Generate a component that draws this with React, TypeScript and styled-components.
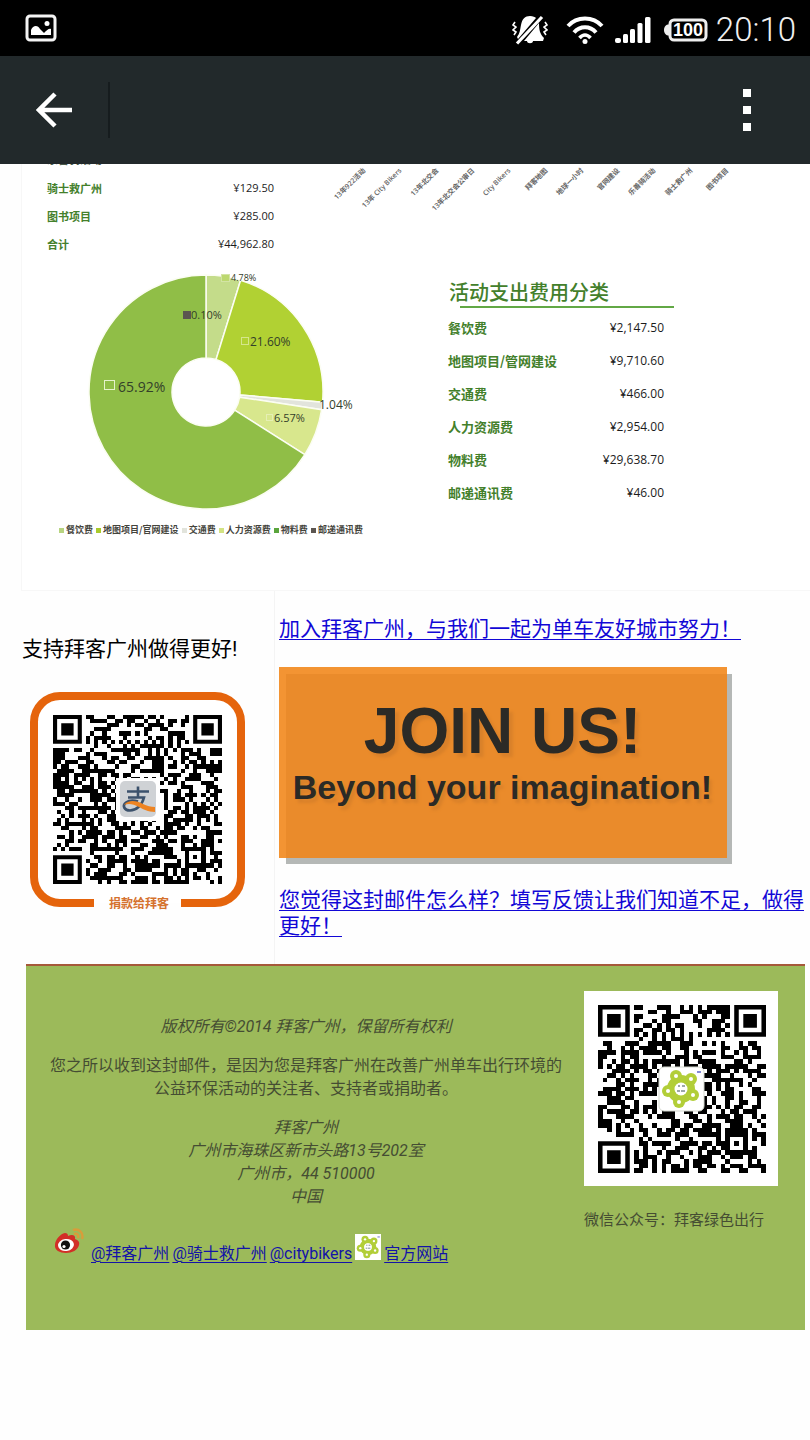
import React from "react";
import styled, { createGlobalStyle } from "styled-components";

const GlobalStyle = createGlobalStyle`
  *, *::before, *::after { box-sizing: border-box; }
  body {
    margin: 0;
    background: #fefefe;
    color: #000;
    font-family: Roboto, "Noto Sans CJK SC", sans-serif;
  }
`;

/* ---------- system and app bars ---------- */

const StatusBar = styled.div`
  display: flex;
  align-items: center;
  justify-content: space-between;
  height: 56px;
  padding: 0 14px 0 25px;
  background: #000;
  color: #fff;
`;

const StatusIcons = styled.div`
  display: flex;
  align-items: center;
  gap: 8px;
  padding-top: 4px;
`;

const IconGroup = styled.div`
  display: flex;
  align-items: center;
  gap: 10px;
  margin: 0 4px 0 10px;
`;

const Clock = styled.time`
  font-size: 33px;
  line-height: 36px;
  font-weight: 300;
  color: #f0f0f0;
`;

const AppBar = styled.header`
  display: flex;
  align-items: center;
  height: 108px;
  padding: 0 36px 0 0;
  background: #22292b;
`;

const BarButton = styled.button<{ $width: number }>`
  display: flex;
  align-items: center;
  justify-content: center;
  width: ${(p) => p.$width}px;
  height: 56px;
  padding: 0;
  border: 0;
  background: none;
  color: #fff;
`;

const BarDivider = styled.span`
  flex: none;
  width: 2px;
  height: 56px;
  margin-right: auto;
  background: #161c1e;
`;

/* ---------- expense report ---------- */

const Report = styled.section`
  margin-left: 21px;
  border-left: 1px solid #f7f7f7;
  border-bottom: 1px solid #f7f7f7;
  background: #fff;
`;

const ReportRow = styled.div<{ $columns: string }>`
  display: grid;
  grid-template-columns: ${(p) => p.$columns};
  align-items: start;
`;

const ProjectCell = styled.div`
  padding-left: 25px;
`;

/* Last visible edge of the row scrolled under the app bar. */
const CutLine = styled.div`
  display: flex;
  align-items: flex-end;
  height: 10px;
  padding-bottom: 1px;
  overflow: hidden;
  font: bold 11px/28px "Noto Sans CJK SC", sans-serif;
  color: #4a5a4a;
`;

const AmountTable = styled.table<{ $label: number; $amount: number; $row: number; $width: number }>`
  width: ${(p) => p.$width}px;
  border-collapse: collapse;

  tr { height: ${(p) => p.$row}px; }
  th, td { padding: 0; line-height: 20px; }
  th {
    text-align: left;
    font-family: "Noto Sans CJK SC", sans-serif;
    font-size: ${(p) => p.$label}px;
    font-weight: bold;
    color: #43802b;
  }
  td {
    text-align: right;
    font-family: "Open Sans", sans-serif;
    font-size: ${(p) => p.$amount}px;
    color: #1c1c1c;
  }
`;

const Legend = styled.ul`
  display: flex;
  justify-content: space-between;
  width: 304px;
  margin: 8px 0 0 37px;
  padding: 0;
  list-style: none;
  font: bold 9px/16px "Noto Sans CJK SC", sans-serif;
  color: #44443c;
`;

const LegendItem = styled.li<{ $color: string }>`
  display: flex;
  align-items: center;
  gap: 2px;
  white-space: nowrap;

  &::before {
    content: "";
    width: 5px;
    height: 5px;
    background: ${(p) => p.$color};
  }
`;

const DonutCell = styled.div`
  padding-bottom: 52px;
`;

const CategoryCell = styled.div`
  padding-top: 20px;
`;

const CategoryTitle = styled.h2`
  margin: 0 0 0 1px;
  font: 500 20px/28px "Noto Sans CJK SC", sans-serif;
  color: #43802b;
`;

const TitleRule = styled.div`
  width: 214px;
  height: 2px;
  margin: 0 0 3px 12px;
  background: #62a845;
`;

/* ---------- calls to action ---------- */

const Actions = styled.section`
  display: flex;
  padding-left: 22px;
  background: #fefefe;
  font-size: 21px;
  line-height: 26px;
`;

const SupportCell = styled.div`
  flex: none;
  width: 253px;
  padding-top: 45px;
  border-right: 1px solid #f4f4f4;
`;

const Paragraph = styled.p`
  margin: 0;
`;

const DonateFigure = styled.div`
  padding: 29px 0 0 8px;
`;

const JoinCell = styled.div`
  flex: 1;
  min-width: 0;
  padding: 25px 5px 25px 4px;
`;

const TextLink = styled.a`
  color: #1207d6;
  text-decoration: underline;
  text-decoration-thickness: 1px;
  text-underline-offset: 3px;
`;

const Banner = styled.div`
  width: 448px;
  margin: 25px 0 29px;
  padding: 29px 8px 43px 0;
  border: solid #f39433;
  border-width: 7px 0 0 7px;
  background: #ea8b2b;
  box-shadow: 5px 6px 0 0 #b5b8b6;
  clip-path: polygon(0 0, 448px 0, 448px 7px, 453px 7px, 453px 197px, 7px 197px, 7px 191px, 0 191px);
  text-align: center;
  white-space: nowrap;
  font-family: "Liberation Sans", sans-serif;
  font-weight: bold;
  color: #2b2a26;
`;

const BannerTitle = styled.div`
  font-size: 64px;
  line-height: 56px;
  text-shadow: 4px 4px 3px #d9812a;
`;

const BannerText = styled.div`
  font-size: 34px;
  line-height: 56px;
  text-shadow: 3px 4px 3px #d9812a;
`;

/* ---------- footer ---------- */

const Footer = styled.footer`
  display: flex;
  justify-content: space-between;
  min-height: 366px;
  margin: 0 5px 109px 26px;
  padding: 0 27px 0 20px;
  border-top: 2px solid #a5593a;
  background: #9cba5a;
  color: #454d33;
  font-size: 16px;
  line-height: 23px;
`;

const FooterText = styled.div`
  width: 520px;
  padding-top: 49px;
`;

const Centered = styled.p`
  margin: 0 0 16px;
  text-align: center;
`;

const Address = styled.address`
  text-align: center;
`;

const SocialLinks = styled.nav`
  display: flex;
  align-items: flex-end;
  gap: 3px;
  padding: 20px 0 0 8px;
  white-space: nowrap;
`;

const SocialLink = styled(TextLink)`
  color: #1313a8;
  padding-top: 14px;
`;

const WeiboMark = styled.span`
  display: flex;
  align-self: flex-start;
  margin-right: 4px;
`;

const SiteMark = styled.span`
  display: flex;
  padding-bottom: 5px;
`;

const WechatCell = styled.div`
  width: 194px;
  padding-top: 25px;
  font-size: 15px;
`;

const WechatLabel = styled.p`
  margin: 16px 0 0;
  white-space: nowrap;
`;

/* ---------- drawings ---------- */

function inFinder(x: number, y: number, n: number) {
  return (x < 8 && y < 8) || (x >= n - 8 && y < 8) || (x < 8 && y >= n - 8);
}

function qrPath(n: number, seed: number) {
  let state = seed;
  let d = "";
  for (let y = 0; y < n; y++) {
    for (let x = 0; x < n; x++) {
      state = (state * 1103515245 + 12345) % 2147483648;
      if (inFinder(x, y, n)) continue;
      const timing = x === 6 || y === 6;
      const ax = Math.abs(x - (n - 7));
      const ay = Math.abs(y - (n - 7));
      const ring = Math.max(ax, ay);
      let dark = (state >> 12) % 100 < 52;
      if (timing) dark = (x + y) % 2 === 0;
      if (ring <= 2) dark = ring !== 1;
      if (dark) d += `M${x} ${y}h1v1h-1z`;
    }
  }
  return d;
}

function finderPath(x: number, y: number) {
  return `M${x} ${y}h7v7h-7zM${x + 1} ${y + 1}v5h5v-5zM${x + 2} ${y + 2}h3v3h-3z`;
}

function QrModules({ n, seed, x, y, size }: { n: number; seed: number; x: number; y: number; size: number }) {
  return (
    <g transform={`translate(${x} ${y}) scale(${size / n})`}>
      <path d={qrPath(n, seed)} shapeRendering="crispEdges" />
      <path d={finderPath(0, 0) + finderPath(n - 7, 0) + finderPath(0, n - 7)} />
    </g>
  );
}

function FlowerMark() {
  const petals = [[-5, -13], [10, -10], [12, 6], [-2, 13], [-13, 2]];
  return (
    <g>
      <circle r="10" fill="none" stroke="#b2ce38" strokeWidth="8" />
      {petals.map(([cx, cy]) => (
        <g key={`${cx}${cy}`}>
          <circle cx={cx} cy={cy} r="6" fill="#b2ce38" />
          <circle cx={cx} cy={cy} r="2" fill="#fff" />
        </g>
      ))}
      <circle r="6.500" fill="#fff" />
      <path d="M-3 -3h2M1 -3h3M-4 2h3M0 2h4" stroke="#7d8a8c" strokeWidth="1.600" />
      <path d="M16 -17h4" stroke="#5b62c8" strokeWidth="1.500" />
    </g>
  );
}

function DonateQr() {
  return (
    <svg width="216" height="220" viewBox="30 691 216 220" role="img" aria-label="捐款给拜客">
      <path d="M94 903H60a26 26 0 0 1-26-26V722a26 26 0 0 1 26-26H215a26 26 0 0 1 26 26V877a26 26 0 0 1-26 26H181" fill="#fff" stroke="#e5640c" strokeWidth="8" />
      <QrModules n={41} seed={90211} x={53} y={715} size={169} />
      <rect x="116" y="778" width="44" height="43" fill="#fff" />
      <rect x="120" y="781" width="36" height="36" rx="5" fill="#cfd2d5" />
      <path d="M127 791.500h22M138 786.500v10M128 797.500h16c-2 8-8 13-14 13c-6 0-8-5-4-8c4-3 9-2 12-1" fill="none" stroke="#3c526c" strokeWidth="2.600" />
      <path d="M124 805c5-6 13-4 19-1c4 2 8 3 12 3v5c-7 0-12-3-16-5c-6-3-10-4-15-2z" fill="#ee8422" />
      <text x="139" y="908" textAnchor="middle" fontFamily="Noto Sans CJK SC" fontSize="12" fontWeight="bold" fill="#d5722e">捐款给拜客</text>
    </svg>
  );
}

function WechatQr() {
  return (
    <svg width="194" height="195" viewBox="0 0 194 195" role="img" aria-label="微信公众号">
      <rect width="194" height="195" fill="#fff" />
      <QrModules n={37} seed={4477} x={14} y={14} size={168} />
      <rect x="75" y="76" width="45" height="44" rx="5" fill="#fff" stroke="#d4d8cf" />
      <g transform="translate(97 98)"><FlowerMark /></g>
    </svg>
  );
}

const CX = 206;
const CY = 392;

function slice(from: number, to: number) {
  const pt = (pct: number, r: number) => {
    const a = (pct / 100) * Math.PI * 2;
    return `${(CX + r * Math.sin(a)).toFixed(2)} ${(CY - r * Math.cos(a)).toFixed(2)}`;
  };
  const large = to - from > 50 ? 1 : 0;
  return `M${pt(from, 117)}A117 117 0 ${large} 1 ${pt(to, 117)}L${pt(to, 34)}A34 34 0 ${large} 0 ${pt(from, 34)}Z`;
}

const SLICES = [
  { from: 0, to: 4.78, color: "#c4dc8a" },
  { from: 4.78, to: 26.38, color: "#b1d133" },
  { from: 26.38, to: 27.42, color: "#e2e4dc" },
  { from: 27.42, to: 33.99, color: "#d8e78d" },
  { from: 33.99, to: 100, color: "#90be47" },
];

function Donut() {
  return (
    <svg width="360" height="256" viewBox="22 258 360 256" display="block">
      {SLICES.map((s) => (
        <path key={s.from} d={slice(s.from, s.to)} fill={s.color} stroke="#fbfdf3" strokeWidth="1.500" />
      ))}
      <rect x="221.500" y="274.500" width="8" height="7" fill="#bcd870" stroke="#d3e4a4" />
      <rect x="183" y="311" width="8" height="8" fill="#5b5550" />
      <rect x="241.500" y="337.500" width="7" height="7" fill="none" stroke="#d5e68c" />
      <rect x="104.500" y="380.500" width="10" height="9" fill="none" stroke="#e6f3cc" />
      <rect x="266.500" y="414.500" width="6" height="6" fill="none" stroke="#e6efb4" />
      <g fontFamily="Open Sans" fill="#33402a">
        <text x="231" y="281" fontSize="9">4.78%</text>
        <text x="191" y="319" fontSize="11">0.10%</text>
        <text x="250" y="346" fontSize="12">21.60%</text>
        <text x="118" y="392" fontSize="14">65.92%</text>
        <text x="319" y="409" fontSize="12">1.04%</text>
        <text x="274" y="422" fontSize="11">6.57%</text>
      </g>
    </svg>
  );
}

const AXIS_LABELS = ["13年922活动", "13年 City Bikers", "13年北交会", "13年北交会公审日", "City Bikers", "拜客地图", "地球一小时", "官网建设", "乐善骑活动", "骑士救广州", "图书项目"];

function AxisLabels() {
  return (
    <svg width="490" height="60" viewBox="320 164 490 60" display="block">
      <g fontFamily="Open Sans, Noto Sans CJK SC" fontSize="7" fontWeight="600" fill="#666">
        {AXIS_LABELS.map((label, i) => (
          <text key={label} textAnchor="end" transform={`translate(${366 + Math.round(i * 36.3)} 171) rotate(-45)`}>{label}</text>
        ))}
      </g>
    </svg>
  );
}

function PictureIcon() {
  return (
    <svg width="32" height="28" viewBox="0 0 32 28">
      <rect x="2" y="2" width="28" height="24" rx="3" fill="none" stroke="#f4f4f4" strokeWidth="3" />
      <path d="M6 21v-5c2-5 7-5 9-1l4 4c3-3 5-5 7-4v6z" fill="#fff" />
      <circle cx="22" cy="9.500" r="2.500" fill="#fff" />
    </svg>
  );
}

function MutedBellIcon() {
  return (
    <svg width="36" height="30" viewBox="0 0 36 30" fill="#fff">
      <path d="M5 22C8 18 8 15 9 10C10 4 13 1 18 1c3 0 5 1 6 2L6 24z" />
      <path d="M27 8c0 7 1 11 5 15l-1 3H21c0 3-6 3-6 0h-3z" />
      <path d="M30 2L5 28.500" stroke="#fff" strokeWidth="3.200" />
      <path d="M3 7l-2 3l3 2l-3 3l3 2l-2 3M33 7l2 3l-3 2l3 3l-3 2l2 3" fill="none" stroke="#fff" strokeWidth="1.600" />
    </svg>
  );
}

function WifiIcon() {
  return (
    <svg width="38" height="30" viewBox="0 0 38 30" fill="none" stroke="#fff" strokeWidth="4">
      <path d="M2 11C11 1 27 1 36 11" />
      <path d="M8 17.500C14 10.500 24 10.500 30 17.500" />
      <path d="M13.500 23C17 19 21 19 24.500 23" strokeWidth="3.600" />
      <circle cx="19" cy="26.500" r="2.500" fill="#fff" stroke="none" />
    </svg>
  );
}

function SignalIcon() {
  return (
    <svg width="38" height="28" viewBox="0 0 38 28" fill="#fff">
      <rect x="1" y="22" width="6" height="5" rx="2" />
      <rect x="9" y="18" width="5" height="9" rx="1.500" />
      <rect x="16" y="13" width="5" height="14" rx="1.500" />
      <rect x="23.500" y="7" width="5" height="20" rx="1.500" />
      <rect x="31" y="1" width="5.500" height="26" rx="1.500" />
    </svg>
  );
}

function BatteryIcon() {
  return (
    <svg width="44" height="24" viewBox="0 0 44 24">
      <rect x="6" y="2" width="36" height="20" rx="4" fill="none" stroke="#eee" strokeWidth="3" />
      <path d="M5 6.500C2 6.500 0 8.500 0 12s2 5.500 5 5.500z" fill="#eee" />
      <text x="24" y="18" textAnchor="middle" fontFamily="Liberation Sans" fontWeight="bold" fontSize="18" fill="#fff">100</text>
    </svg>
  );
}

function BackIcon() {
  return (
    <svg width="36" height="36" viewBox="0 0 36 36" fill="none" stroke="#fff" strokeWidth="4.500">
      <path d="M19 2L3 18L19 34M3 18H36" />
    </svg>
  );
}

function MoreIcon() {
  return (
    <svg width="8" height="42" viewBox="0 0 8 42" fill="#fff">
      <path d="M0 0h8v8H0zM0 17h8v8H0zM0 34h8v8H0z" />
    </svg>
  );
}

function WeiboIcon() {
  return (
    <svg width="30" height="26" viewBox="0 0 30 26">
      <path d="M1 17C1 12 6 6 11 5c2 0 3 1 3 3c4-2 8-1 7 3c3 1 5 3 4 6c-1 5-7 8-13 8S0 22 1 17z" fill="#d22f27" />
      <ellipse cx="12" cy="17" rx="8" ry="6" fill="#fff" transform="rotate(-8 12 17)" />
      <circle cx="11.500" cy="17" r="4.600" fill="#111" />
      <circle cx="10" cy="18.500" r="1.600" fill="#fff" />
      <path d="M19 2c6-2 11 3 9 9M20 6c3-1 5 1 4 4" fill="none" stroke="#d99c3a" strokeWidth="2.400" />
    </svg>
  );
}

function SiteIcon() {
  return (
    <svg width="26" height="26" viewBox="-22 -22 44 44">
      <rect x="-22" y="-22" width="44" height="44" fill="#fff" />
      <FlowerMark />
    </svg>
  );
}

/* ---------- data ---------- */

type Entry = [string, string];

const PROJECTS: Entry[] = [
  ["骑士救广州", "¥129.50"],
  ["图书项目", "¥285.00"],
  ["合计", "¥44,962.80"],
];

const CATEGORIES: Entry[] = [
  ["餐饮费", "¥2,147.50"],
  ["地图项目/管网建设", "¥9,710.60"],
  ["交通费", "¥466.00"],
  ["人力资源费", "¥2,954.00"],
  ["物料费", "¥29,638.70"],
  ["邮递通讯费", "¥46.00"],
];

const LEGEND: Entry[] = [
  ["餐饮费", "#b7d480"],
  ["地图项目/官网建设", "#a9ca2c"],
  ["交通费", "#e2e4dc"],
  ["人力资源费", "#d3e383"],
  ["物料费", "#5aa53c"],
  ["邮递通讯费", "#5b5550"],
];

type AmountsProps = { rows: Entry[]; label: number; amount: number; row: number; width: number };

function Amounts({ rows, label, amount, row, width }: AmountsProps) {
  return (
    <AmountTable $label={label} $amount={amount} $row={row} $width={width}>
      <tbody>
        {rows.map(([name, value]) => (
          <tr key={name}>
            <th scope="row">{name}</th>
            <td>{value}</td>
          </tr>
        ))}
      </tbody>
    </AmountTable>
  );
}

export default function App() {
  return (
    <>
      <GlobalStyle />
      <StatusBar>
        <PictureIcon />
        <StatusIcons>
          <MutedBellIcon />
          <IconGroup>
            <WifiIcon />
            <SignalIcon />
          </IconGroup>
          <BatteryIcon />
          <Clock>20:10</Clock>
        </StatusIcons>
      </StatusBar>
      <AppBar>
        <BarButton $width={108} aria-label="返回"><BackIcon /></BarButton>
        <BarDivider />
        <BarButton $width={54} aria-label="更多"><MoreIcon /></BarButton>
      </AppBar>
      <main>
        <Report>
          <ReportRow $columns="298px 1fr">
            <ProjectCell>
              <CutLine>乐善骑活动</CutLine>
              <Amounts rows={PROJECTS} label={11} amount={11} row={28} width={227} />
            </ProjectCell>
            <AxisLabels />
          </ReportRow>
          <ReportRow $columns="426px 1fr">
            <DonutCell>
              <Donut />
              <Legend>
                {LEGEND.map(([name, color]) => (
                  <LegendItem key={name} $color={color}>{name}</LegendItem>
                ))}
              </Legend>
            </DonutCell>
            <CategoryCell>
              <CategoryTitle>活动支出费用分类</CategoryTitle>
              <TitleRule />
              <Amounts rows={CATEGORIES} label={13} amount={12} row={33} width={216} />
            </CategoryCell>
          </ReportRow>
        </Report>
        <Actions>
          <SupportCell>
            <Paragraph>支持拜客广州做得更好!</Paragraph>
            <DonateFigure><DonateQr /></DonateFigure>
          </SupportCell>
          <JoinCell>
            <Paragraph><TextLink href="#join">加入拜客广州，与我们一起为单车友好城市努力！</TextLink></Paragraph>
            <Banner>
              <BannerTitle>JOIN US!</BannerTitle>
              <BannerText>Beyond your imagination!</BannerText>
            </Banner>
            <Paragraph><TextLink href="#feedback">您觉得这封邮件怎么样？填写反馈让我们知道不足，做得更好！</TextLink></Paragraph>
          </JoinCell>
        </Actions>
        <Footer>
          <FooterText>
            <Centered><em>版权所有©2014 拜客广州，保留所有权利</em></Centered>
            <Centered>您之所以收到这封邮件，是因为您是拜客广州在改善广州单车出行环境的公益环保活动的关注者、支持者或捐助者。</Centered>
            <Address>
              拜客广州<br />
              广州市海珠区新市头路13号202室<br />
              广州市，44 510000<br />
              中国
            </Address>
            <SocialLinks>
              <WeiboMark><WeiboIcon /></WeiboMark>
              <SocialLink href="#baike">@拜客广州</SocialLink>
              <SocialLink href="#qishi">@骑士救广州</SocialLink>
              <SocialLink href="#citybikers">@citybikers</SocialLink>
              <SiteMark><SiteIcon /></SiteMark>
              <SocialLink href="#site">官方网站</SocialLink>
            </SocialLinks>
          </FooterText>
          <WechatCell>
            <WechatQr />
            <WechatLabel>微信公众号：拜客绿色出行</WechatLabel>
          </WechatCell>
        </Footer>
      </main>
    </>
  );
}
